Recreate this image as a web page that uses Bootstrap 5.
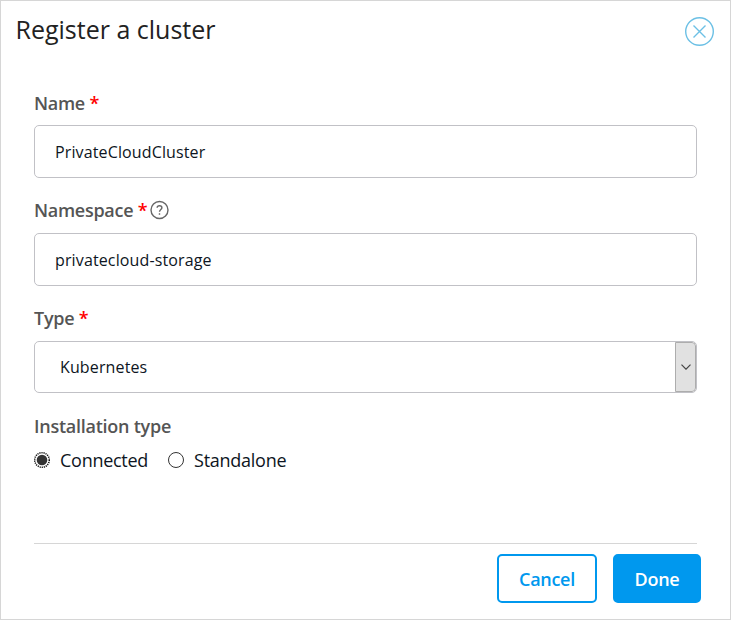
<!DOCTYPE html>
<html lang="en">
<head>
<meta charset="utf-8">
<meta name="viewport" content="width=device-width, initial-scale=1">
<title>Register a cluster</title>
<link href="https://cdn.jsdelivr.net/npm/bootstrap@5.3.0/dist/css/bootstrap.min.css" rel="stylesheet">
<style>
body{font-family:"Open Sans","Noto Sans",sans-serif;color:#0d1522;background:#fff}
.dialog{height:620px;border:1px solid #d6d6d6}
.dialog-head{height:86px;padding:10px 15px 0 14.5px}
.dialog-title{font-size:25px;line-height:36px;color:#222}
.close-btn{width:30px;height:30px;margin-top:5px}
.dialog-body{padding:0 33px;height:456px}
.field{height:108px}
.field-label{height:38px;line-height:32px;font-size:18px;letter-spacing:-.28px;font-weight:600;color:#555;margin:0}
.field + .field .field-label,.installation{line-height:30px}
.req{color:#f00}
.help{margin:5px 0 0 2px}
.field .form-control{height:53px;border:1px solid #c1c1c6;border-radius:5px;padding:0 20px;font-size:16px;letter-spacing:.13px;color:#0d1522}
.pick{height:52px;border:1px solid #c1c1c6;border-radius:5px;padding-left:25px;font-size:16px;letter-spacing:.13px;overflow:hidden}
.pick-arrow{width:21px;height:50px;background:#e1e1e1;border:1px solid #adadad;border-radius:0 4px 4px 0}
.field-label.installation{height:34px;letter-spacing:-.25px}
.opt{font-size:18px;line-height:30px;letter-spacing:-.27px}
.choice{gap:10px;margin-right:20px}
.dialog-foot{border-top:1px solid #d6d6d6;margin:0 33px}
.actions{padding:10px 29px 0;gap:16px}
.actions .btn{height:49px;font-size:18px;font-weight:600;letter-spacing:-.3px;border-radius:5px;border:2px solid #0098ee;padding:2px 0 0}
.actions .btn-cancel{width:100px;color:#0098ee;background:#fff}
.actions .btn-done{width:88px;color:#fff;background:#0098ee}
</style>
</head>
<body>
<main class="dialog d-flex flex-column">
  <header class="dialog-head d-flex justify-content-between align-items-start">
    <h1 class="dialog-title fw-normal m-0">Register a cluster</h1>
    <button class="close-btn btn p-0 border-0 d-flex" aria-label="Close">
      <svg width="30" height="30" viewBox="0 0 30 30" fill="none" stroke="#6cc0e5" stroke-width="1.4"><circle cx="14.500" cy="15.500" r="13.800"/><path d="M8.500 9.500l12 12M20.500 9.500l-12 12"/></svg>
    </button>
  </header>
  <form class="dialog-body">
    <div class="field">
      <label class="field-label d-block" for="name">Name <span class="req">*</span></label>
      <input id="name" class="form-control shadow-none" value="PrivateCloudCluster">
    </div>
    <div class="field">
      <label class="field-label d-flex" for="ns"><span>Namespace <span class="req">*</span></span>
        <svg class="help" width="20" height="20" viewBox="0 0 20 20" fill="none" stroke="#666" stroke-width="1.4"><circle cx="10.500" cy="10" r="8.500"/><path d="M8.100 7.700C8.300 5.100 12.900 5.200 12.900 7.700C12.900 9.500 10.500 9.500 10.500 11.800M10.500 13.200v1.600"/></svg>
      </label>
      <input id="ns" class="form-control shadow-none" value="privatecloud-storage">
    </div>
    <div class="field">
      <div class="field-label">Type <span class="req">*</span></div>
      <div class="pick d-flex align-items-center justify-content-between" role="combobox" aria-label="Type">
        <span>Kubernetes</span>
        <span class="pick-arrow d-flex align-items-center justify-content-center">
          <svg width="10" height="6" viewBox="0 0 10 6" fill="none" stroke="#444" stroke-width="1.2"><path d="M.5.7L5 5.200 9.500.7"/></svg>
        </span>
      </div>
    </div>
    <div class="field-label installation">Installation type</div>
    <div class="d-flex opt">
      <span class="d-flex align-items-center choice" role="radio" aria-checked="true">
        <svg width="16" height="16" viewBox="0 0 16 16"><circle cx="8" cy="8" r="7.300" fill="none" stroke="#111" stroke-width="1.500" stroke-dasharray="1.200 .9"/><circle cx="8" cy="8" r="5.300" fill="#333"/></svg>
        <span>Connected</span>
      </span>
      <span class="d-flex align-items-center choice" role="radio" aria-checked="false">
        <svg width="16" height="16" viewBox="0 0 16 16"><circle cx="8" cy="8" r="7.500" fill="#fff" stroke="#333"/></svg>
        <span>Standalone</span>
      </span>
    </div>
  </form>
  <div class="dialog-foot"></div>
  <footer class="actions d-flex justify-content-end">
    <button class="btn btn-cancel">Cancel</button>
    <button class="btn btn-done">Done</button>
  </footer>
</main>
<script src="https://cdn.jsdelivr.net/npm/bootstrap@5.3.0/dist/js/bootstrap.bundle.min.js"></script>
</body>
</html>
